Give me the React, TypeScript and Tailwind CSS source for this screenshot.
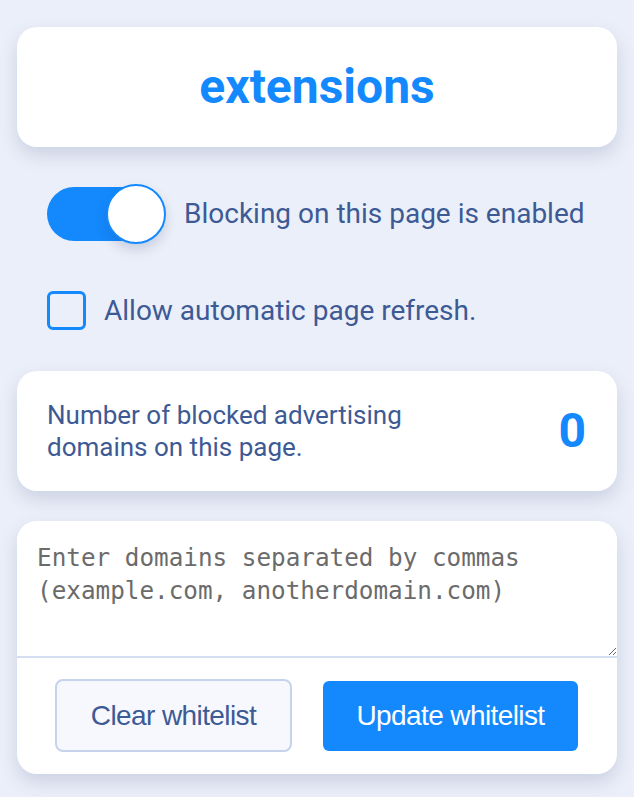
import React from "react";

export default function App() {
  return (
    <div
      className="min-h-screen w-full bg-[#ebeff9] px-[17px] pt-[27px] pb-[24px]"
      style={{ fontFamily: "Roboto, 'Noto Sans', sans-serif" }}
    >
      {/* Header card */}
      <div className="flex h-[120px] items-center justify-center rounded-[20px] bg-white shadow-[0_8px_18px_rgba(60,80,130,0.18)]">
        <h1 className="text-[48px] font-bold leading-none text-[#1389fd]">extensions</h1>
      </div>

      {/* Toggle row */}
      <div className="mt-[40px] flex items-center pl-[30px]">
        <div className="relative h-[54px] w-[116px] shrink-0 rounded-full bg-[#1389fd]">
          <div className="absolute right-[-3px] top-[-3px] h-[60px] w-[60px] rounded-full border-2 border-[#1389fd] bg-white shadow-[0_6px_12px_rgba(40,60,110,0.18)]" />
        </div>
        <span className="ml-[21px] whitespace-nowrap text-[28px] leading-none text-[#3d5a95]">
          Blocking on this page is enabled
        </span>
      </div>

      {/* Checkbox row */}
      <div className="mt-[50px] flex items-center pl-[30px]">
        <div className="h-[39px] w-[39px] shrink-0 rounded-[6px] border-[3px] border-[#1389fd]" />
        <span className="ml-[18px] whitespace-nowrap text-[28px] leading-none text-[#3d5a95]">
          Allow automatic page refresh.
        </span>
      </div>

      {/* Stats card */}
      <div className="mt-[41px] flex h-[120px] items-center justify-between rounded-[20px] bg-white pl-[30px] pr-[31px] shadow-[0_8px_18px_rgba(60,80,130,0.18)]">
        <p className="w-[400px] text-[26px] leading-[32px] text-[#3d5a95]">
          Number of blocked advertising domains on this page.
        </p>
        <span className="text-[48px] font-bold leading-none text-[#1389fd]">0</span>
      </div>

      {/* Whitelist card */}
      <div className="mt-[30px] overflow-hidden rounded-[20px] bg-white shadow-[0_8px_18px_rgba(60,80,130,0.18)]">
        <textarea
          className="block h-[137px] w-full border-b-2 border-[#d3def0] bg-white px-[20px] pt-[20px] text-[24.3px] leading-[33px] text-[#333] outline-none placeholder:text-[#6b6b6b]"
          style={{ fontFamily: "'DejaVu Sans Mono', monospace" }}
          placeholder="Enter domains separated by commas (example.com, anotherdomain.com)"
        />
        <div className="flex items-center gap-[31px] pl-[38px] pr-[39px] pt-[21px] pb-[22px]">
          <button
            className="flex h-[73px] w-[237px] items-center justify-center rounded-[8px] border-2 border-[#c5d3ec] bg-[#f6f8fd] text-[28px] tracking-[-0.6px] text-[#3d5a95]"
            style={{ fontFamily: "'Liberation Sans', Arial, sans-serif" }}
          >
            Clear whitelist
          </button>
          <button
            className="flex h-[70px] w-[255px] items-center justify-center rounded-[6px] bg-[#1389fd] text-[28px] tracking-[-0.6px] text-white"
            style={{ fontFamily: "'Liberation Sans', Arial, sans-serif" }}
          >
            Update whitelist
          </button>
        </div>
      </div>
    </div>
  );
}
